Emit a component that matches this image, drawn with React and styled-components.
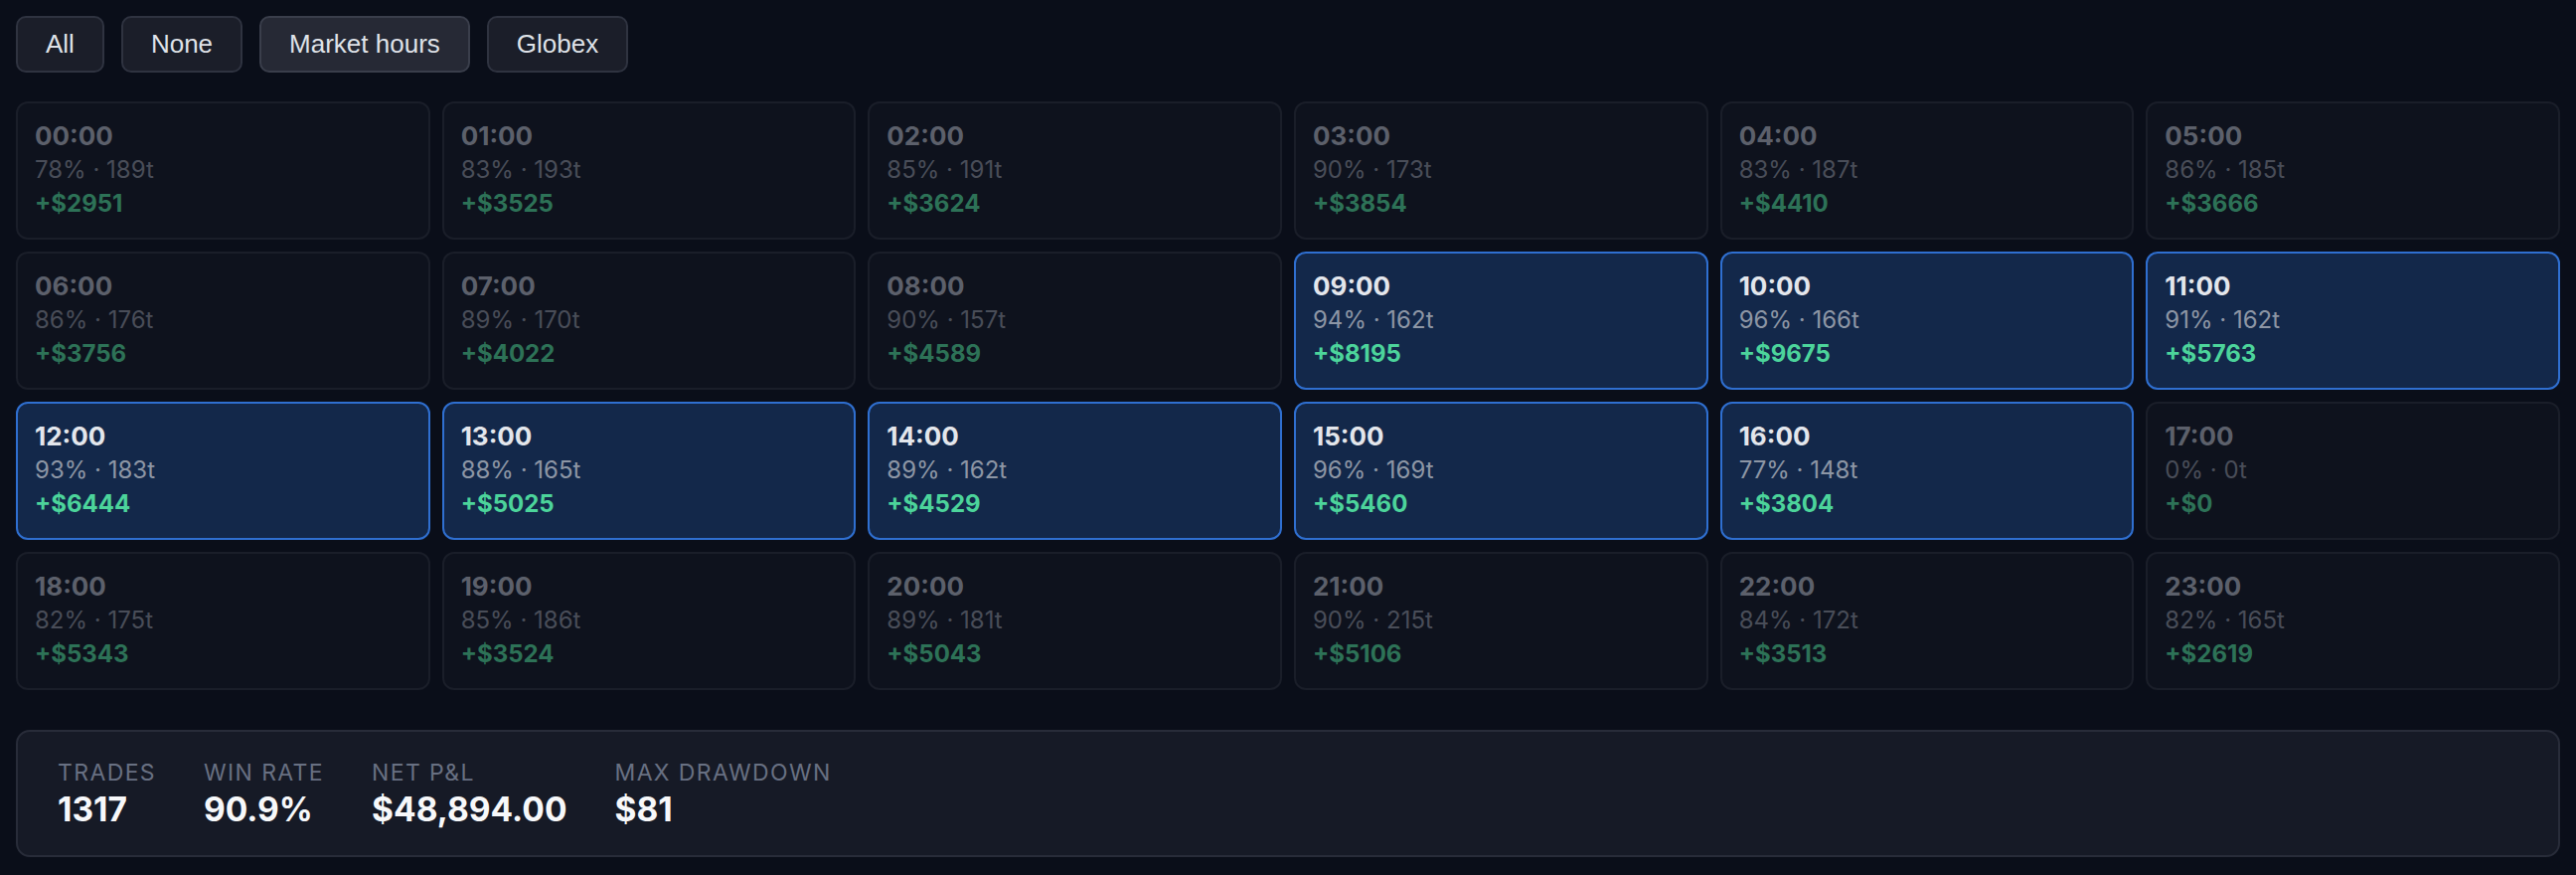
import React, { useState } from "react";
import styled, { createGlobalStyle } from "styled-components";

const hours = [
  ["00:00", 78, 189, 2951],
  ["01:00", 83, 193, 3525],
  ["02:00", 85, 191, 3624],
  ["03:00", 90, 173, 3854],
  ["04:00", 83, 187, 4410],
  ["05:00", 86, 185, 3666],
  ["06:00", 86, 176, 3756],
  ["07:00", 89, 170, 4022],
  ["08:00", 90, 157, 4589],
  ["09:00", 94, 162, 8195],
  ["10:00", 96, 166, 9675],
  ["11:00", 91, 162, 5763],
  ["12:00", 93, 183, 6444],
  ["13:00", 88, 165, 5025],
  ["14:00", 89, 162, 4529],
  ["15:00", 96, 169, 5460],
  ["16:00", 77, 148, 3804],
  ["17:00", 0, 0, 0],
  ["18:00", 82, 175, 5343],
  ["19:00", 85, 186, 3524],
  ["20:00", 89, 181, 5043],
  ["21:00", 90, 215, 5106],
  ["22:00", 84, 172, 3513],
  ["23:00", 82, 165, 2619],
];

const presets = ["All", "None", "Market hours", "Globex"];

const App = () => {
  const [selected] = useState([9, 10, 11, 12, 13, 14, 15, 16]);

  return (
    <>
      <GlobalStyle />
      <Toolbar>
        {presets.map((p) => (
          <Preset key={p} $current={p === "Market hours"}>
            {p}
          </Preset>
        ))}
      </Toolbar>
      <Grid>
        {hours.map(([label, wr, trades, pnl], i) => {
          const on = selected.includes(i);
          return (
            <Cell key={label} $on={on}>
              <Time $on={on}>{label}</Time>
              <Meta $on={on}>
                {wr}% · {trades}t
              </Meta>
              <Pnl $on={on}>+${pnl}</Pnl>
            </Cell>
          );
        })}
      </Grid>
      <Summary>
        <Stat>
          <Label>Trades</Label>
          <Value>1317</Value>
        </Stat>
        <Stat>
          <Label>Win rate</Label>
          <Value>90.9%</Value>
        </Stat>
        <Stat>
          <Label>Net P&amp;L</Label>
          <Value>$48,894.00</Value>
        </Stat>
        <Stat>
          <Label>Max drawdown</Label>
          <Value>$81</Value>
        </Stat>
      </Summary>
    </>
  );
};
export default App;

const GlobalStyle = createGlobalStyle`
  body {
    margin: 16px;
    background: #0a0e19;
    font-family: Inter, "Noto Sans", sans-serif;
  }
`;
const Toolbar = styled.div`
  display: flex;
  gap: 17px;
`;
const Preset = styled.button`
  font-family: "Liberation Sans", Arial, sans-serif;
  font-size: 26px;
  line-height: 29px;
  padding: 12px 28px;
  border-radius: 10px;
  border: 2px solid ${(p) => (p.$current ? "#3a3e4b" : "#2f3340")};
  background: ${(p) => (p.$current ? "#262935" : "#1b1e29")};
  color: #dfe2e8;
  cursor: pointer;
`;
const Grid = styled.div`
  margin-top: 29px;
  display: grid;
  grid-template-columns: repeat(6, 1fr);
  gap: 12px;
`;
const Cell = styled.div`
  border-radius: 12px;
  border: 2px solid ${(p) => (p.$on ? "#2f6fd0" : "#1a1e29")};
  background: ${(p) => (p.$on ? "#13284a" : "#0e121d")};
  padding: 16px 17px 17px;
  cursor: pointer;
`;
const Time = styled.div`
  font-size: 26px;
  line-height: 34px;
  font-weight: 700;
  color: ${(p) => (p.$on ? "#e3e6ec" : "#5c606b")};
`;
const Meta = styled.div`
  font-size: 24px;
  line-height: 34px;
  color: ${(p) => (p.$on ? "#8d96a5" : "#494d58")};
`;
const Pnl = styled.div`
  font-size: 24px;
  line-height: 34px;
  font-weight: 700;
  color: ${(p) => (p.$on ? "#4cd49b" : "#2d7257")};
`;
const Summary = styled.div`
  margin-top: 40px;
  display: flex;
  gap: 48px;
  padding: 26px 40px;
  border: 2px solid #282c39;
  border-radius: 14px;
  background: #161a26;
`;
const Stat = styled.div`
  display: flex;
  flex-direction: column;
`;
const Label = styled.div`
  font-size: 23px;
  line-height: 30px;
  letter-spacing: 0.06em;
  text-transform: uppercase;
  color: #687082;
`;
const Value = styled.div`
  margin-top: 2px;
  font-size: 33.5px;
  line-height: 40px;
  font-weight: 700;
  color: #f7f8fa;
`;
